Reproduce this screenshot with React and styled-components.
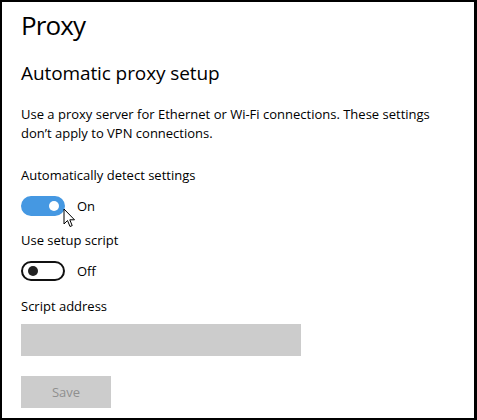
import React from "react";
import styled, { createGlobalStyle } from "styled-components";

const GlobalStyle = createGlobalStyle`
  html, body {
    margin: 0;
    padding: 0;
    background: #fff;
  }
  * {
    box-sizing: border-box;
  }
`;

const Frame = styled.div`
  position: relative;
  width: 477px;
  height: 420px;
  border-top: 2px solid #000;
  border-left: 2px solid #000;
  border-right: 3px solid #000;
  border-bottom: 2px solid #000;
  background: #fff;
  padding: 0 0 0 19px;
  font-family: "Open Sans", "Noto Sans", sans-serif;
  color: #000;
  overflow: hidden;
`;

const Title = styled.h1`
  margin: 0;
  padding-top: 5px;
  font-size: 26px;
  font-weight: 400;
  line-height: 36px;
  letter-spacing: -0.9px;
  color: #000;
`;

const Subtitle = styled.h2`
  margin: 17px 0 0;
  font-size: 19px;
  font-weight: 400;
  line-height: 26px;
  letter-spacing: -0.1px;
`;

const Description = styled.p`
  margin: 19px 0 0;
  font-size: 13px;
  line-height: 19px;
  letter-spacing: 0;
`;

const Label = styled.div`
  margin-top: ${(p) => p.$top || 14}px;
  font-size: 13px;
  line-height: 19px;
`;

const ToggleRow = styled.div`
  position: relative;
  display: flex;
  align-items: center;
  gap: 12px;
  margin-top: ${(p) => p.$top || 12}px;
  height: 20px;
`;

const Track = styled.div`
  width: 44px;
  height: 20px;
  border-radius: 10px;
  display: flex;
  align-items: center;
  padding: 0 ${(p) => (p.$on ? 4 : 5)}px;
  justify-content: ${(p) => (p.$on ? "flex-end" : "flex-start")};
  background: ${(p) => (p.$on ? "#4598e2" : "#fff")};
  border: 2px solid ${(p) => (p.$on ? "#4598e2" : "#111")};
`;

const Knob = styled.div`
  width: 10px;
  height: 10px;
  border-radius: 50%;
  background: ${(p) => (p.$on ? "#fff" : "#222")};
`;

const ToggleText = styled.span`
  font-size: 13px;
  line-height: 19px;
`;

const Cursor = styled.svg`
  position: absolute;
  left: 42px;
  top: 12px;
`;

const Input = styled.div`
  margin-top: 8px;
  width: 280px;
  height: 32px;
  background: #cccccc;
`;

const SaveButton = styled.button`
  margin-top: 20px;
  width: 90px;
  height: 32px;
  border: none;
  background: #cccccc;
  color: #8f8f8f;
  font-family: inherit;
  font-size: 13px;
  padding: 0;
  display: block;
`;

const Toggle = ({ on, label, top }) => (
  <ToggleRow $top={top}>
    <Track $on={on}>
      <Knob $on={on} />
    </Track>
    <ToggleText>{label}</ToggleText>
    {on && (
      <Cursor width="13" height="21" viewBox="0 0 13 21">
        <path
          d="M1 1 L1 16 L4.5 12.5 L7 18.5 L9.2 17.6 L6.8 11.8 L11.5 11.8 Z"
          fill="#fff"
          stroke="#000"
          strokeWidth="1"
          strokeLinejoin="miter"
        />
      </Cursor>
    )}
  </ToggleRow>
);

export default function App() {
  return (
    <>
      <GlobalStyle />
      <Frame>
        <Title>Proxy</Title>
        <Subtitle>Automatic proxy setup</Subtitle>
        <Description>
          Use a proxy server for Ethernet or Wi-Fi connections. These settings
          <br />
          don’t apply to VPN connections.
        </Description>
        <Label $top={23}>Automatically detect settings</Label>
        <Toggle on label="On" top={11} />
        <Label $top={15}>Use setup script</Label>
        <Toggle label="Off" top={11} />
        <Label $top={16}>Script address</Label>
        <Input />
        <SaveButton>Save</SaveButton>
      </Frame>
    </>
  );
}
